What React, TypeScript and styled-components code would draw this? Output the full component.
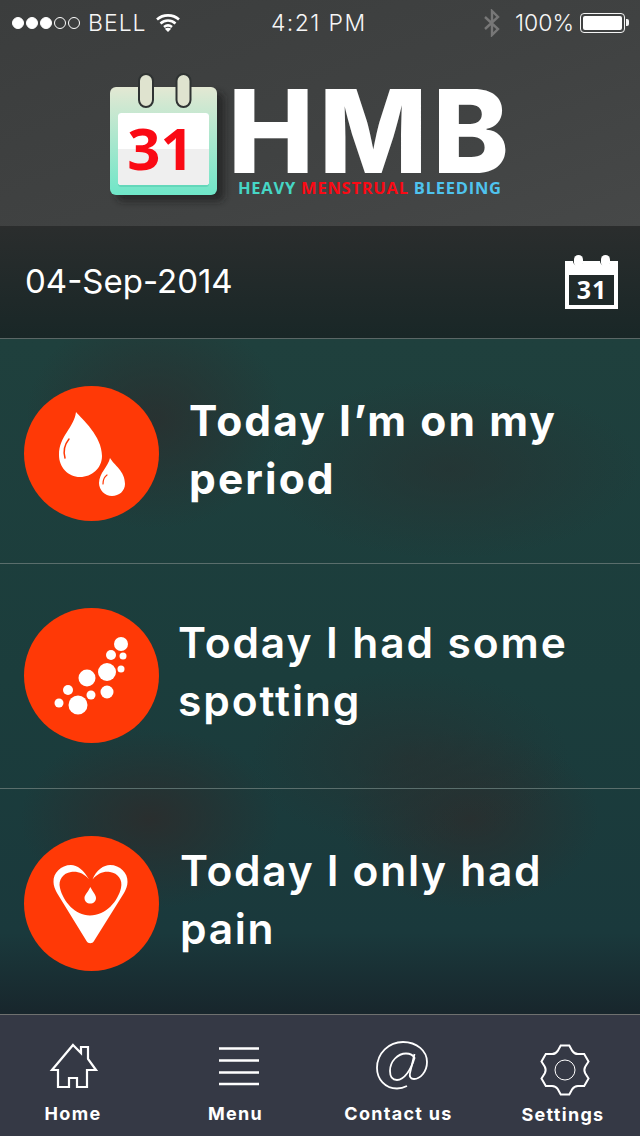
import styled, { createGlobalStyle } from 'styled-components'

const GlobalStyle = createGlobalStyle`
  html, body {
    margin: 0;
    padding: 0;
    background: #1b3a3a;
  }
  * {
    box-sizing: border-box;
  }
`

const Screen = styled.div`
  width: 640px;
  height: 1136px;
  display: flex;
  flex-direction: column;
  overflow: hidden;
  font-family: Inter, 'Open Sans', sans-serif;
  color: #fff;
`

const Header = styled.header`
  height: 228px;
  flex: none;
  background: linear-gradient(160deg, #3b3d3d 0%, #404242 55%, #464848 100%);
  border-bottom: 2px solid #2b2d2d;
`

const StatusBar = styled.div`
  height: 46px;
  padding: 0 12px;
  display: flex;
  align-items: center;
  font-family: Inter, 'Liberation Sans', sans-serif;
  font-weight: 300;
  font-size: 23px;
  color: #f6f6f6;
`

const StatusLeft = styled.div`
  width: 259px;
  display: flex;
  align-items: center;
`

const Signal = styled.span<{ $filled?: boolean }>`
  width: 12px;
  height: 12px;
  margin-right: 2px;
  border-radius: 50%;
  border: 1px solid #fff;
  background: ${p => (p.$filled ? '#fff' : 'transparent')};
`

const Carrier = styled.span`
  margin: 0 9px 0 6px;
  letter-spacing: 1px;
`

const Clock = styled.span`
  width: 213px;
  letter-spacing: 1.400px;
`

const StatusRight = styled.div`
  display: flex;
  align-items: center;
`

const Percent = styled.span`
  margin: 0 8px 0 15px;
  width: 57px;
  white-space: nowrap;
`

const Battery = styled.div`
  width: 45px;
  height: 20px;
  padding: 2px;
  border: 1.500px solid #f4f4f4;
  border-radius: 4px;
  position: relative;
  &::before {
    content: '';
    display: block;
    height: 100%;
    background: #fff;
    border-radius: 2px;
  }
  &::after {
    content: '';
    position: absolute;
    right: -5px;
    top: 5px;
    width: 3px;
    height: 7px;
    background: #f4f4f4;
    border-radius: 0 2px 2px 0;
  }
`

const Brand = styled.div`
  display: flex;
  padding: 28px 0 0 110px;
  gap: 12px;
`

const LogoIcon = styled.svg`
  width: 112px;
  height: 136px;
  flex: none;
  display: block;
  overflow: visible;
`

const Wordmark = styled.div`
  width: 280px;
  display: flex;
  flex-direction: column;
`

const Letters = styled.div`
  font-weight: 800;
  font-size: 115px;
  line-height: 82px;
  margin: 17px 0 -1px -6px;
  letter-spacing: 5px;
  color: #fff;
`

const Tagline = styled.div`
  margin: 7px 0 0 4px;
  font-family: 'Open Sans', sans-serif;
  font-weight: 700;
  font-size: 16.500px;
  line-height: 18px;
  letter-spacing: 0.750px;
  white-space: nowrap;
`

const Word = styled.span<{ $color: string }>`
  color: ${p => p.$color};
`

const DateBar = styled.div`
  height: 111px;
  flex: none;
  padding: 0 22px 0 25px;
  display: flex;
  align-items: center;
  justify-content: space-between;
  background: linear-gradient(180deg, #2a2d2d 0%, #192727 100%);
  border-bottom: 1px solid #5b6766;
`

const DateText = styled.div`
  font-size: 33px;
  font-weight: 400;
  margin-top: -4px;
`

const CalendarIcon = styled.svg`
  width: 53px;
  height: 54px;
  display: block;
  margin-top: -2px;
`

const List = styled.main`
  flex: 1;
  display: flex;
  flex-direction: column;
  background:
    radial-gradient(ellipse 130px 110px at 155px 80px, rgba(44, 44, 44, 0.7), transparent),
    radial-gradient(ellipse 190px 90px at 450px 130px, rgba(40, 48, 48, 0.6), transparent),
    radial-gradient(ellipse 160px 90px at 410px 420px, rgba(40, 48, 48, 0.6), transparent),
    radial-gradient(ellipse 130px 90px at 150px 480px, rgba(44, 44, 44, 0.85), transparent),
    radial-gradient(ellipse 130px 90px at 470px 480px, rgba(44, 44, 44, 0.75), transparent),
    linear-gradient(180deg, #1f403d 0%, #1b3d3c 50%, #1a393c 88%, #18262c 100%);
`

const Row = styled.div<{ $height: number; $top: number; $bottom?: number; $gap: number }>`
  height: ${p => p.$height}px;
  flex: none;
  display: flex;
  align-items: center;
  gap: ${p => p.$gap}px;
  padding: ${p => p.$top}px 0 ${p => p.$bottom ?? 0}px 24px;
  & + & {
    border-top: 1px solid #5a6e6c;
  }
`

const Badge = styled.svg`
  width: 135px;
  height: 135px;
  flex: none;
  display: block;
`

const Label = styled.div<{ $strong?: boolean; $spacing: number }>`
  font-size: 42.500px;
  font-weight: ${p => (p.$strong ? 700 : 600)};
  letter-spacing: ${p => p.$spacing}px;
  line-height: 58px;
  margin-top: -7px;
`

const Footer = styled.nav`
  height: 122px;
  flex: none;
  display: grid;
  grid-template-columns: 146px 179px 147px 168px;
  background: #353945;
  border-top: 1px solid #6f716f;
`

const Tab = styled.div<{ $drop?: boolean; $indent?: number }>`
  display: flex;
  flex-direction: column;
  align-items: center;
  justify-content: flex-end;
  padding: 0 0 ${p => (p.$drop ? 9 : 10)}px ${p => p.$indent ?? 0}px;
  font-weight: 700;
  font-size: 18px;
  letter-spacing: 1.300px;
  line-height: 24px;
`

const TabIcon = styled.svg<{ $below: number; $shift: number }>`
  display: block;
  margin: 0 0 ${p => p.$below}px ${p => p.$shift}px;
  overflow: visible;
`

function gearPath(cx: number, cy: number) {
  const at = (deg: number, r: number) => {
    const a = (deg * Math.PI) / 180
    return `${(cx + r * Math.sin(a)).toFixed(1)} ${(cy - r * Math.cos(a)).toFixed(1)}`
  }
  let d = `M${at(-10, 25)}`
  for (let i = 0; i < 6; i++) {
    const t = i * 60
    d += ` L${at(t + 10, 25)} L${at(t + 21, 20.5)} Q${at(t + 30, 18.5)} ${at(t + 39, 20.5)} L${at(t + 50, 25)}`
  }
  return d + 'z'
}

export default function App() {
  return (
    <Screen>
      <GlobalStyle />
      <Header>
        <StatusBar>
          <StatusLeft>
            <Signal $filled />
            <Signal $filled />
            <Signal $filled />
            <Signal />
            <Signal />
            <Carrier>BELL</Carrier>
            <svg width="24" height="20" viewBox="0 0 24 20" fill="none" stroke="#fff" strokeWidth="2.600">
              <path d="M1 6.500C7 1 17 1 23 6.500" />
              <path d="M4.500 10.500c4.500-4 10.500-4 15 0" />
              <path d="M8 14c2.500-2 5.500-2 8 0" />
              <path d="M12 19l-3.200-3.300c2-1.200 4.400-1.200 6.400 0z" fill="#fff" stroke="none" />
            </svg>
          </StatusLeft>
          <Clock>4:21 PM</Clock>
          <StatusRight>
            <svg width="16" height="28" viewBox="0 0 16 28" fill="none" stroke="#777" strokeWidth="2.400">
              <path d="M1 8l13 12-6 6V2l6 6L1 20" />
            </svg>
            <Percent>100%</Percent>
            <Battery />
          </StatusRight>
        </StatusBar>
        <Brand>
          <LogoIcon viewBox="0 0 112 136">
            <defs>
              <linearGradient id="cal" x1="0" y1="0" x2="0" y2="1">
                <stop offset="0" stopColor="#e3e8d3" />
                <stop offset="1" stopColor="#6fe6c8" />
              </linearGradient>
              <filter id="blur" x="-20%" y="-20%" width="140%" height="140%">
                <feGaussianBlur stdDeviation="3.500" />
              </filter>
            </defs>
            <rect x="7" y="19" width="107" height="108" rx="6" fill="#1a1c1c" opacity="0.7" filter="url(#blur)" />
            <rect x="0" y="13" width="107" height="108" rx="6" fill="url(#cal)" />
            <rect x="8" y="39" width="91" height="74" rx="3" fill="#56cdb0" opacity="0.6" />
            <rect x="8" y="39" width="91" height="72" rx="3" fill="#fff" />
            <path d="M8 75h91v33a3 3 0 0 1-3 3H11a3 3 0 0 1-3-3z" fill="#efefef" />
            <text x="50.500" y="96" textAnchor="middle" fontFamily="'Open Sans', sans-serif" fontWeight="700" fontSize="58" fill="#fa0a14">31</text>
            <rect x="29" y="0" width="14" height="33" rx="7" fill="#dfe3cf" stroke="#2f3333" strokeWidth="2" />
            <rect x="66.500" y="0" width="14" height="33" rx="7" fill="#dfe3cf" stroke="#2f3333" strokeWidth="2" />
          </LogoIcon>
          <Wordmark>
            <Letters>HMB</Letters>
            <Tagline>
              <Word $color="#46d6c5">HEAVY</Word> <Word $color="#fa0a14">MENSTRUAL</Word>{' '}
              <Word $color="#4fc3ee">BLEEDING</Word>
            </Tagline>
          </Wordmark>
        </Brand>
      </Header>

      <DateBar>
        <DateText>04-Sep-2014</DateText>
        <CalendarIcon viewBox="0 0 53 54">
          <path d="M0 6h8a5 5 0 0 0 10 0h17a5 5 0 0 0 10 0h8v48H0zM4 20v30h45V20z" fill="#fff" fillRule="evenodd" />
          <rect x="9" y="0" width="9" height="12" rx="4.500" fill="#fff" />
          <rect x="36" y="0" width="9" height="12" rx="4.500" fill="#fff" />
          <text x="27" y="44" textAnchor="middle" fontFamily="'Open Sans', sans-serif" fontWeight="700" fontSize="25" letterSpacing="1" fill="#fff">31</text>
        </CalendarIcon>
      </DateBar>

      <List>
        <Row $height={224} $top={5} $gap={30}>
          <Badge viewBox="0 0 135 135">
            <circle cx="67.500" cy="67.500" r="67.500" fill="#ff3906" />
            <path d="M52 26C58 33 78 50 78 70C78 82 68 91 56 91C44 91 35 81 35 69C35 50 50 42 52 26z" fill="#fff" />
            <path d="M86 72C90 79 101 85 101 98C101 105 95 110 88 110C81 110 75 104 75 97C75 87 84 81 86 72z" fill="#fff" />
            <path d="M45 53C41 58 39 65 41 72" fill="none" stroke="#ff3906" strokeWidth="1.500" strokeLinecap="round" />
            <path d="M83 89C80 91 79 94 79 98" fill="none" stroke="#ff3906" strokeWidth="1.200" strokeLinecap="round" />
          </Badge>
          <Label $strong $spacing={2.1}>
            Today I’m on my
            <br />
            period
          </Label>
        </Row>
        <Row $height={225} $top={0} $bottom={1} $gap={19}>
          <Badge viewBox="0 0 135 135">
            <circle cx="67.500" cy="67.500" r="67.500" fill="#ff3906" />
            <g fill="#fff">
              <circle cx="97" cy="36" r="7" />
              <circle cx="87" cy="47" r="5" />
              <circle cx="99" cy="48" r="3.500" />
              <circle cx="83" cy="64" r="9" />
              <circle cx="97" cy="61" r="3.500" />
              <circle cx="63" cy="70" r="8.500" />
              <circle cx="83" cy="84" r="6.500" />
              <circle cx="67" cy="87" r="4.500" />
              <circle cx="44" cy="82" r="5" />
              <circle cx="54" cy="97" r="9.500" />
              <circle cx="35" cy="95" r="4.500" />
            </g>
          </Badge>
          <Label $spacing={1.9}>
            Today I had some
            <br />
            spotting
          </Label>
        </Row>
        <Row $height={226} $top={4} $gap={21}>
          <Badge viewBox="0 0 135 135">
            <circle cx="67.500" cy="67.500" r="67.500" fill="#ff3906" />
            <path
              d="M65 43.500C60 34 53 29 47 29C37 29 29 37 29.500 46C29.500 50 31 53 33 57L62.500 105C64 108 68.500 108 70 105L100 57C102 53 103.500 50 103.500 46C104 37 96 29 86 29C80 29 72 34 68.500 43.500C74 37 80 35 86 36C94 37 99 44 97 52C94 65 82 79.500 66 79.500C51 79.500 39 65 36 52C34 44 39 37 47 36C53 35 60 37 65 43.500z"
              fill="#fff"
            />
            <path d="M66.300 51C69 56 72 59 72 62C72 65.500 69.500 67.500 66.300 67.500C63 67.500 60.500 65.500 60.500 62C60.500 59 64 56 66.300 51z" fill="#fff" />
          </Badge>
          <Label $spacing={1.7}>
            Today I only had
            <br />
            pain
          </Label>
        </Row>
      </List>

      <Footer>
        <Tab>
          <TabIcon $below={14} $shift={2} width="46" height="44" viewBox="11 9 46 44" fill="none" stroke="#fff" strokeWidth="2.200">
            <path d="M33 10L41 18V12H48V24L56 35H47V52H37V43H29V52H18V35H12z" />
          </TabIcon>
          Home
        </Tab>
        <Tab>
          <TabIcon $below={17} $shift={7} width="40" height="38" viewBox="0 0 40 38" stroke="#fff" strokeWidth="2.500">
            <path d="M0 1.500h40M0 13.500h40M0 25.500h40M0 37h40" />
          </TabIcon>
          Menu
        </Tab>
        <Tab>
          <TabIcon $below={12} $shift={7} width="52" height="49" viewBox="6 2 52 49" fill="none" stroke="#fff" strokeWidth="1.800">
            <path d="M37 47C33 49 30 49.500 27 49.500C15 49.500 7 40 7 29C7 14 19 3 33 3C47 3 57 12 57 23C57 33 50 40 44 40C41 40 39 38 40 34L44.500 15" />
            <path d="M44.500 19C43 16 40 14.500 36 14.500C28 14.500 20 22 20 32C20 38 23 41 27 41C34 41 41 31 44.500 19z" />
          </TabIcon>
          Contact us
        </Tab>
        <Tab $drop $indent={14}>
          <TabIcon $below={7} $shift={4} width="52" height="52" viewBox="0 0 52 52" fill="none" stroke="#fff" strokeWidth="2">
            <path d={gearPath(26, 26)} />
            <circle cx="26" cy="26" r="10" strokeWidth="1" />
          </TabIcon>
          Settings
        </Tab>
      </Footer>
    </Screen>
  )
}
